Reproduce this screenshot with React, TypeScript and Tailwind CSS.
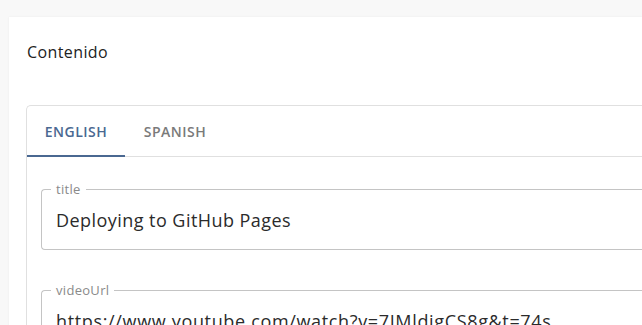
import React from "react";

function Field({ label, value, tracking }: { label: string; value: string; tracking: string }) {
  return (
    <div className="relative h-[61px] rounded-l-[4px] border border-r-0 border-[#c4c4c4] pl-[14px] flex items-center">
      <span className="absolute left-[9px] top-[-10px] bg-white px-[5px] text-[13px] leading-[18px] tracking-[0.3px] text-[#8a8a8a]">
        {label}
      </span>
      <span className={`whitespace-nowrap text-[18px] leading-[24px] text-[#2b2b2b] pt-[1px] ${tracking}`}>{value}</span>
    </div>
  );
}

export default function App() {
  return (
    <div
      className="h-[325px] overflow-hidden bg-[#f8f8f8] pt-[17px] pl-[9px]"
      style={{ fontFamily: '"Open Sans", "Liberation Sans", sans-serif' }}
    >
      <div className="h-[400px] bg-white pl-[17px] pt-[23px] shadow-[0_0_2px_rgba(0,0,0,0.06)]">
        <div className="text-[16px] leading-[24px] tracking-[0.4px] text-[#222] pl-[1px]">Contenido</div>
        <div className="mt-[41px] rounded-tl-[5px] border border-r-0 border-b-0 border-[#e0e0e0]">
          <div className="flex h-[51px] border-b border-[#e0e0e0]">
            <div className="relative flex w-[98px] items-center justify-center text-[14px] font-semibold tracking-[0.5px] text-[#4a6891]">
              ENGLISH
              <div className="absolute bottom-[-1px] left-0 right-0 h-[2px] bg-[#4a6891]" />
            </div>
            <div className="flex w-[100px] items-center justify-center text-[14px] font-semibold tracking-[0.5px] text-[#7a7a7a]">
              SPANISH
            </div>
          </div>
          <div className="flex flex-col gap-[40px] pl-[14px] pt-[32px]">
            <Field label="title" value="Deploying to GitHub Pages" tracking="tracking-[0.45px]" />
            <Field label="videoUrl" value="https://www.youtube.com/watch?v=7IMldigCS8g&t=74s" tracking="tracking-[0.65px]" />
          </div>
        </div>
      </div>
    </div>
  );
}
